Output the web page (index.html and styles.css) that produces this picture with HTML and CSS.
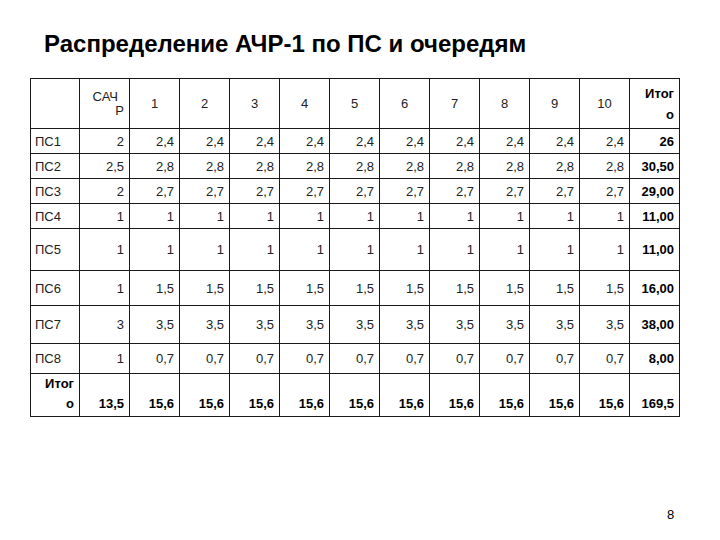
FILE: index.html
```
<!DOCTYPE html>
<html lang="ru">
<head>
<meta charset="utf-8">
<link rel="stylesheet" href="styles.css">
</head>
<body>
<div class="slide">
  <h1 class="title">Распределение АЧР-1 по ПС и очередям</h1>
  <table class="grid">
    <colgroup>
      <col class="c-label"><col><col><col><col><col><col><col><col><col><col><col><col>
    </colgroup>
    <tr class="r-head">
      <td></td>
      <td class="sachr"><span class="l1">САЧ</span><span class="l2">Р</span></td>
      <td class="hc">1</td><td class="hc">2</td><td class="hc">3</td><td class="hc">4</td><td class="hc">5</td>
      <td class="hc">6</td><td class="hc">7</td><td class="hc">8</td><td class="hc">9</td><td class="hc">10</td>
      <td class="b two"><span>Итог</span><span>о</span></td>
    </tr>
    <tr class="r25"><td class="lbl">ПС1</td><td>2</td><td>2,4</td><td>2,4</td><td>2,4</td><td>2,4</td><td>2,4</td><td>2,4</td><td>2,4</td><td>2,4</td><td>2,4</td><td>2,4</td><td class="b">26</td></tr>
    <tr class="r25"><td class="lbl">ПС2</td><td>2,5</td><td>2,8</td><td>2,8</td><td>2,8</td><td>2,8</td><td>2,8</td><td>2,8</td><td>2,8</td><td>2,8</td><td>2,8</td><td>2,8</td><td class="b">30,50</td></tr>
    <tr class="r25"><td class="lbl">ПС3</td><td>2</td><td>2,7</td><td>2,7</td><td>2,7</td><td>2,7</td><td>2,7</td><td>2,7</td><td>2,7</td><td>2,7</td><td>2,7</td><td>2,7</td><td class="b">29,00</td></tr>
    <tr class="r25"><td class="lbl">ПС4</td><td>1</td><td>1</td><td>1</td><td>1</td><td>1</td><td>1</td><td>1</td><td>1</td><td>1</td><td>1</td><td>1</td><td class="b">11,00</td></tr>
    <tr class="r5"><td class="lbl">ПС5</td><td>1</td><td>1</td><td>1</td><td>1</td><td>1</td><td>1</td><td>1</td><td>1</td><td>1</td><td>1</td><td>1</td><td class="b">11,00</td></tr>
    <tr class="r6"><td class="lbl">ПС6</td><td>1</td><td>1,5</td><td>1,5</td><td>1,5</td><td>1,5</td><td>1,5</td><td>1,5</td><td>1,5</td><td>1,5</td><td>1,5</td><td>1,5</td><td class="b">16,00</td></tr>
    <tr class="r7"><td class="lbl">ПС7</td><td>3</td><td>3,5</td><td>3,5</td><td>3,5</td><td>3,5</td><td>3,5</td><td>3,5</td><td>3,5</td><td>3,5</td><td>3,5</td><td>3,5</td><td class="b">38,00</td></tr>
    <tr class="r8"><td class="lbl">ПС8</td><td>1</td><td>0,7</td><td>0,7</td><td>0,7</td><td>0,7</td><td>0,7</td><td>0,7</td><td>0,7</td><td>0,7</td><td>0,7</td><td>0,7</td><td class="b">8,00</td></tr>
    <tr class="r-total b"><td class="two"><span>Итог</span><span>о</span></td><td>13,5</td><td>15,6</td><td>15,6</td><td>15,6</td><td>15,6</td><td>15,6</td><td>15,6</td><td>15,6</td><td>15,6</td><td>15,6</td><td>15,6</td><td>169,5</td></tr>
  </table>
  <div class="pagenum">8</div>
</div>
</body>
</html>
```
FILE: styles.css
```
html, body {
  margin: 0;
  padding: 0;
  background: #ffffff;
}
.slide {
  width: 720px;
  height: 540px;
  display: flex;
  flex-direction: column;
  font-family: "Liberation Sans", Arial, sans-serif;
  color: #111;
}
.title {
  margin: 30px 0 0 44px;
  font-size: 24px;
  line-height: 28px;
  font-weight: bold;
  color: #000;
}
.grid {
  margin: 20px 0 0 30px;
  border-collapse: collapse;
  table-layout: fixed;
  width: 649px;
  font-size: 13px;
  border: 1px solid #1a1a1a;
}
.grid col {
  width: 50px;
}
.grid col.c-label {
  width: 49px;
}
.grid td {
  border: 1px solid #1a1a1a;
  padding: 0 5px 0 4px;
  text-align: right;
  vertical-align: middle;
  line-height: 15px;
  color: #222;
  white-space: nowrap;
}
.grid td.lbl {
  text-align: left;
}
.grid td.hc {
  text-align: center;
  padding: 0;
}
.r-head { height: 50px; }
.r25 { height: 25px; }
.r5 { height: 42px; }
.r6 { height: 35px; }
.r7 { height: 38px; }
.r8 { height: 30px; }
.r-total { height: 40px; }
.r-total td { vertical-align: bottom; padding-bottom: 5px; }
.b, .grid td.b, .r-total td { font-weight: bold; color: #000; }
.two span, .sachr span { display: block; }
.grid td.two { line-height: 21px; }
.r-total td.two { line-height: 20px; padding-bottom: 2px; }
.grid td.sachr { line-height: 14px; }
.sachr .l1 { margin-right: 6px; }
.pagenum {
  margin: auto 0 0 667px;
  padding-bottom: 18px;
  font-size: 13px;
  color: #000;
}
```
